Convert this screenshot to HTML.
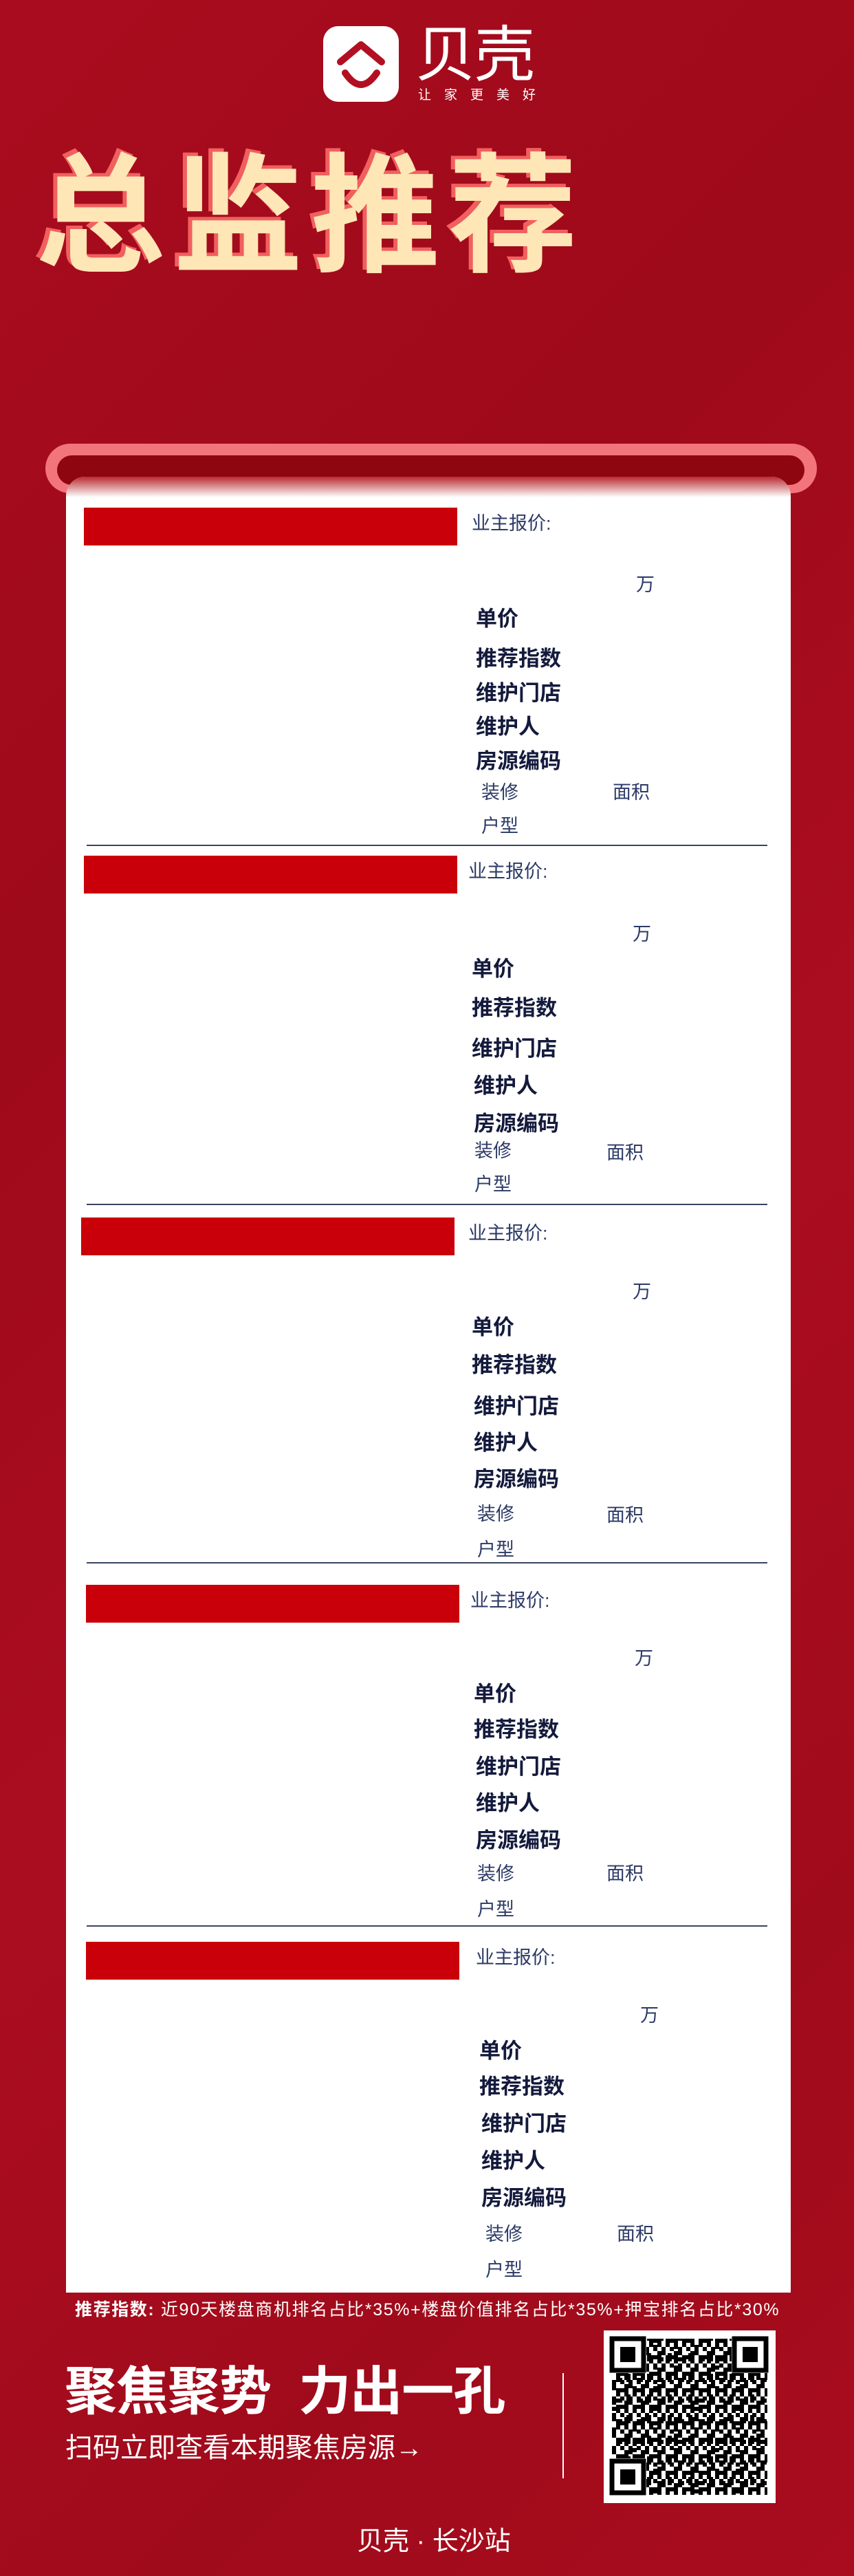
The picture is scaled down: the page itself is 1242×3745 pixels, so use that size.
<!DOCTYPE html>
<html><head><meta charset="utf-8">
<style>
*{margin:0;padding:0;box-sizing:border-box}
body{width:1242px;height:3745px;position:relative;overflow:hidden;font-family:"Liberation Sans","Noto Sans CJK SC",sans-serif;
background:linear-gradient(135deg,#a90c1e 0%,#9e0a1a 30%,#ab0d20 55%,#a00b1b 80%,#a80c1e 100%);}
.a{position:absolute;white-space:nowrap}
.title{left:52px;top:205px;font-size:188px;font-weight:bold;color:#fee6b6;letter-spacing:12px;line-height:220px;
text-shadow:-6px -5px 0 #f0605f;}
.card{left:96px;top:693px;width:1054px;height:2640px;background:#fff;border-radius:28px 28px 0 0}
.bar{position:absolute;height:55px;width:543px;background:#c90009}
.t{position:absolute;color:#2c3a66;font-size:27px;line-height:30px}
.b{position:absolute;color:#141a3c;font-size:31px;font-weight:bold;line-height:34px}
.div{position:absolute;left:126px;width:990px;height:2px;background:#3a4460}
</style></head><body>

<div class="a" style="left:470px;top:38px;width:110px;height:110px;background:#fff;border-radius:22px">
<svg width="110" height="110" viewBox="0 0 110 110"><path d="M25 52 L55 27 L85 52" fill="none" stroke="#b30f22" stroke-width="10" stroke-linecap="round" stroke-linejoin="round"/><path d="M32 68 Q55 102 78 68" fill="none" stroke="#b30f22" stroke-width="10" stroke-linecap="round"/></svg>
</div>
<div class="a" style="left:604px;top:32px;font-size:88px;color:#fff;line-height:96px;letter-spacing:-2px">贝壳</div>
<div class="a" style="left:608px;top:128px;font-size:19px;color:#fff;letter-spacing:19px;line-height:22px">让家更美好</div>

<div class="a title">总监推荐</div>

<div class="a" style="left:66px;top:645px;width:1122px;height:72px;background:#f3757c;border-radius:36px"></div>
<div class="a" style="left:83px;top:662px;width:1087px;height:43px;background:#8e0610;border-radius:22px"></div>
<div class="a card"></div>
<div class="a" style="left:96px;top:693px;width:1054px;height:30px;background:linear-gradient(#b82a30,rgba(255,255,255,0));border-radius:28px 28px 0 0"></div>

<div style="position:absolute;left:0;top:738px;width:1242px">
<div class="bar" style="left:122px;top:0"></div>
<div class="t" style="left:686px;top:8px">业主报价:</div>
<div class="t" style="left:925px;top:97px">万</div>
<div class="b" style="left:692px;top:145px">单价</div>
<div class="b" style="left:692px;top:203px">推荐指数</div>
<div class="b" style="left:692px;top:253px">维护门店</div>
<div class="b" style="left:692px;top:302px">维护人</div>
<div class="b" style="left:692px;top:352px">房源编码</div>
<div class="t" style="left:700px;top:399px">装修</div>
<div class="t" style="left:891px;top:399px">面积</div>
<div class="t" style="left:700px;top:448px">户型</div>
</div>
<div class="div" style="top:1228px"></div>

<div style="position:absolute;left:0;top:1244px;width:1242px">
<div class="bar" style="left:122px;top:0"></div>
<div class="t" style="left:681px;top:8px">业主报价:</div>
<div class="t" style="left:920px;top:99px">万</div>
<div class="b" style="left:686px;top:148px">单价</div>
<div class="b" style="left:686px;top:205px">推荐指数</div>
<div class="b" style="left:686px;top:264px">维护门店</div>
<div class="b" style="left:689px;top:318px">维护人</div>
<div class="b" style="left:689px;top:373px">房源编码</div>
<div class="t" style="left:690px;top:414px">装修</div>
<div class="t" style="left:882px;top:417px">面积</div>
<div class="t" style="left:690px;top:463px">户型</div>
</div>
<div class="div" style="top:1750px"></div>

<div style="position:absolute;left:0;top:1770px;width:1242px">
<div class="bar" style="left:118px;top:0"></div>
<div class="t" style="left:681px;top:8px">业主报价:</div>
<div class="t" style="left:920px;top:93px">万</div>
<div class="b" style="left:686px;top:143px">单价</div>
<div class="b" style="left:686px;top:198px">推荐指数</div>
<div class="b" style="left:689px;top:258px">维护门店</div>
<div class="b" style="left:689px;top:311px">维护人</div>
<div class="b" style="left:689px;top:364px">房源编码</div>
<div class="t" style="left:694px;top:416px">装修</div>
<div class="t" style="left:882px;top:418px">面积</div>
<div class="t" style="left:694px;top:468px">户型</div>
</div>
<div class="div" style="top:2271px"></div>

<div style="position:absolute;left:0;top:2304px;width:1242px">
<div class="bar" style="left:125px;top:0"></div>
<div class="t" style="left:684px;top:8px">业主报价:</div>
<div class="t" style="left:923px;top:92px">万</div>
<div class="b" style="left:689px;top:142px">单价</div>
<div class="b" style="left:689px;top:194px">推荐指数</div>
<div class="b" style="left:692px;top:248px">维护门店</div>
<div class="b" style="left:692px;top:301px">维护人</div>
<div class="b" style="left:692px;top:355px">房源编码</div>
<div class="t" style="left:694px;top:405px">装修</div>
<div class="t" style="left:882px;top:405px">面积</div>
<div class="t" style="left:694px;top:457px">户型</div>
</div>
<div class="div" style="top:2799px"></div>

<div style="position:absolute;left:0;top:2823px;width:1242px">
<div class="bar" style="left:125px;top:0"></div>
<div class="t" style="left:692px;top:8px">业主报价:</div>
<div class="t" style="left:931px;top:92px">万</div>
<div class="b" style="left:697px;top:142px">单价</div>
<div class="b" style="left:697px;top:194px">推荐指数</div>
<div class="b" style="left:700px;top:248px">维护门店</div>
<div class="b" style="left:700px;top:302px">维护人</div>
<div class="b" style="left:700px;top:356px">房源编码</div>
<div class="t" style="left:706px;top:410px">装修</div>
<div class="t" style="left:897px;top:410px">面积</div>
<div class="t" style="left:706px;top:462px">户型</div>
</div>

<div class="a" style="left:109px;top:3343px;font-size:25px;color:#fff;line-height:30px;letter-spacing:1.6px"><b>推荐指数:</b> 近90天楼盘商机排名占比*35%+楼盘价值排名占比*35%+押宝排名占比*30%</div>
<div class="a" style="left:94px;top:3434px;font-size:76px;font-weight:bold;color:#fff;line-height:88px;letter-spacing:-1px">聚焦聚势&nbsp;&nbsp;力出一孔</div>
<div class="a" style="left:95px;top:3536px;font-size:40px;color:#fff;line-height:46px;letter-spacing:0px">扫码立即查看本期聚焦房源→</div>
<div class="a" style="left:818px;top:3450px;width:2px;height:153px;background:#fff"></div>
<div class="a" style="left:878px;top:3388px;width:250px;height:251px;background:#fff">
<svg width="250" height="251" viewBox="0 0 250 251">
<defs><pattern id="q" width="24" height="24" patternUnits="userSpaceOnUse">
<rect x="0" y="0" width="6" height="6"/><rect x="12" y="0" width="6" height="12"/><rect x="6" y="6" width="6" height="6"/><rect x="18" y="12" width="6" height="6"/><rect x="0" y="12" width="12" height="6"/><rect x="6" y="18" width="6" height="6"/><rect x="18" y="18" width="6" height="6"/></pattern>
<pattern id="q2" width="30" height="30" patternUnits="userSpaceOnUse"><rect x="3" y="3" width="6" height="12"/><rect x="18" y="9" width="9" height="6"/><rect x="12" y="21" width="6" height="6"/></pattern></defs>
<rect x="12" y="12" width="226" height="227" fill="url(#q)"/>
<rect x="12" y="12" width="226" height="227" fill="url(#q2)"/>
<g><rect x="10" y="10" width="52" height="52" fill="#fff"/><rect x="12" y="12" width="46" height="46" fill="none" stroke="#000" stroke-width="7"/><rect x="24" y="24" width="22" height="22"/></g>
<g><rect x="186" y="10" width="54" height="52" fill="#fff"/><rect x="190" y="12" width="46" height="46" fill="none" stroke="#000" stroke-width="7"/><rect x="202" y="24" width="22" height="22"/></g>
<g><rect x="10" y="186" width="52" height="54" fill="#fff"/><rect x="12" y="190" width="46" height="46" fill="none" stroke="#000" stroke-width="7"/><rect x="24" y="202" width="22" height="22"/></g>
</svg></div>
<div class="a" style="left:519px;top:3672px;font-size:38px;color:#fff;line-height:46px">贝壳 · 长沙站</div>
</body></html>
